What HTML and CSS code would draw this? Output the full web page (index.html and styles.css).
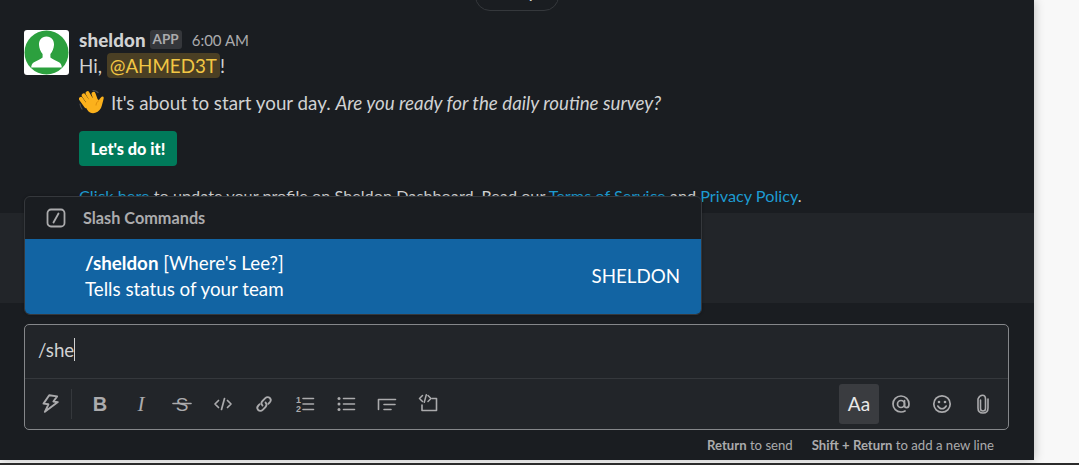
FILE: index.html
```html
<!DOCTYPE html>
<html lang="en">
<head>
    <meta charset="UTF-8">
    <title>sheldon</title>
    <link rel="stylesheet" href="styles.css">
</head>
<body>
    <div class="app">
        <!-- Message list -->
        <div class="messages">
            <div class="date-pill">Today</div>
            <div class="message">
                <svg class="avatar" viewBox="0 0 45 45">
                    <defs><clipPath id="disc"><circle cx="22.5" cy="22.5" r="22"/></clipPath></defs>
                    <rect width="45" height="45" rx="3" fill="#fff"/>
                    <circle cx="22.5" cy="22.5" r="22" fill="#2ca03e"/>
                    <g clip-path="url(#disc)" fill="#fff">
                        <path d="M22.5 6.500c-5 0-7.800 3.700-7.500 8.500.2 3.600 1.700 6.800 3.600 9v3.500c-2 1.800-6 3-9 5-1.700 1.200-2.400 3.200-2.400 5h30.600c0-1.800-.7-3.800-2.400-5-3-2-7-3.200-9-5V24c1.900-2.200 3.400-5.400 3.600-9 .3-4.800-2.500-8.500-7.500-8.500z"/>
                    </g>
                </svg>
                <div class="message-body">
                    <div class="message-head">
                        <span class="sender">sheldon</span>
                        <span class="app-tag">APP</span>
                        <span class="time">6:00 AM</span>
                    </div>
                    <p class="line line-hi">Hi, <span class="mention">@AHMED3T</span>!</p>
                    <p class="line line-wave">
                        <svg class="wave" viewBox="0 0 26 26">
                            <g stroke="#4a4f55" stroke-width="1.200" fill="none" stroke-linecap="round">
                                <path d="M1 15c.3 2 1 3.600 2 5"/>
                                <path d="M14 1.500c2 0 3.800.8 5 2"/>
                            </g>
                            <g fill="#fbb11c">
                                <rect x="2.500" y="7" width="4" height="13" rx="2" transform="rotate(-35 4.500 13.500)"/>
                                <rect x="5.500" y="3.500" width="4" height="14" rx="2" transform="rotate(-35 7.500 10.500)"/>
                                <rect x="9" y="1.500" width="4" height="14" rx="2" transform="rotate(-30 11 8.500)"/>
                                <rect x="14" y="2.500" width="4" height="13" rx="2" transform="rotate(-20 16 9)"/>
                                <path d="M5.500 15l6-7 8.500 3c1.500-2 2.500-3.500 3.500-3.500 1.500 0 1.500 1.500.8 3.500-.8 2.500-1 5-2.300 8-2 4-7 6.500-11 4.500-2.500-1.200-4-4.500-5.500-8.500z"/>
                            </g>
                            <path d="M20 11.500c-2 1-3 3-3 5" stroke="#e08e0b" stroke-width="1" fill="none"/>
                        </svg>It's about to start your day. <em>Are you ready for the daily routine survey?</em></p>
                    <button class="action-btn">Let's do it!</button>
                    <p class="line line-links"><a>Click here</a> to update your profile on Sheldon Dashboard. Read our <a>Terms of Service</a> and <a>Privacy Policy</a>.</p>
                </div>
            </div>
        </div>

        <div class="band"></div>

        <!-- Slash command popup -->
        <div class="popup">
            <div class="popup-head">
                <svg class="popup-icon" viewBox="0 0 20 20">
                    <rect x="1.500" y="1.500" width="17" height="17" rx="3.500" fill="none" stroke="#ababad" stroke-width="1.800"/>
                    <path d="M7.500 14.500l5-9" stroke="#ababad" stroke-width="1.800" stroke-linecap="round"/>
                </svg>
                <span>Slash Commands</span>
            </div>
            <div class="popup-item">
                <div>
                    <div><b>/sheldon</b> [Where's Lee?]</div>
                    <div>Tells status of your team</div>
                </div>
                <span>SHELDON</span>
            </div>
        </div>

        <!-- Composer -->
        <div class="composer">
            <div class="composer-input"><span class="typed">/she</span></div>
            <div class="toolbar">
                <svg class="tool-icon" viewBox="0 0 20 20">
                    <path d="M8 1.500h8l-3 5.500h4.500L6 18.500l2.500-8H3.500z" fill="none" stroke="#ababad" stroke-width="1.900" stroke-linejoin="round" transform="rotate(8 10 10)"/>
                </svg>
                <span class="tool-sep"></span>
                <span class="tool tool-b">B</span>
                <span class="tool tool-i">I</span>
                <svg class="tool-icon" viewBox="0 0 20 20">
                    <text x="10" y="16.500" text-anchor="middle" class="strike-s">S</text>
                    <path d="M1 9.500h18" stroke="#ababad" stroke-width="1.600" stroke-linecap="round"/>
                </svg>
                <svg class="tool-icon" viewBox="0 0 20 20">
                    <path d="M5.500 6.500L2 10l3.500 3.500M14.500 6.500L18 10l-3.500 3.500M11.500 4.500l-3 11" fill="none" stroke="#ababad" stroke-width="1.700" stroke-linecap="round" stroke-linejoin="round"/>
                </svg>
                <svg class="tool-icon" viewBox="0 0 20 20">
                    <g fill="none" stroke="#ababad" stroke-width="1.800" stroke-linecap="round">
                        <path d="M8.500 11.500c-1.500-1.500-1.300-3.200 0-4.500l2.800-2.800c1.400-1.400 3.300-1.400 4.500-.2s1.200 3.100-.2 4.500l-1.300 1.300"/>
                        <path d="M11.500 8.500c1.500 1.500 1.300 3.200 0 4.500l-2.800 2.800c-1.400 1.400-3.300 1.400-4.500.2s-1.200-3.100.2-4.500l1.300-1.300"/>
                    </g>
                </svg>
                <svg class="tool-icon" viewBox="0 0 20 20">
                    <text x="1" y="8.500" class="list-num">1</text>
                    <text x="1" y="17.500" class="list-num">2</text>
                    <path d="M8 4.500h10.500M8 10h10.500M8 15.500h10.500" stroke="#ababad" stroke-width="1.600" stroke-linecap="round"/>
                </svg>
                <svg class="tool-icon" viewBox="0 0 20 20">
                    <g fill="#ababad"><circle cx="3" cy="4.500" r="1.500"/><circle cx="3" cy="10" r="1.500"/><circle cx="3" cy="15.500" r="1.500"/></g>
                    <path d="M7.500 4.500h11M7.500 10h11M7.500 15.500h11" stroke="#ababad" stroke-width="1.600" stroke-linecap="round"/>
                </svg>
                <svg class="tool-icon" viewBox="0 0 20 20">
                    <path d="M1.500 5.500h17M7 10.500h11M7 15.500h7M1.500 5.500v10" stroke="#ababad" stroke-width="1.600" stroke-linecap="round" fill="none"/>
                </svg>
                <svg class="tool-icon" viewBox="0 0 20 20">
                    <path d="M14 4.500h4.500v12H4V11" fill="none" stroke="#ababad" stroke-width="1.600" stroke-linecap="round" stroke-linejoin="round"/>
                    <path d="M4.500 1.500L1.500 4.500l3 3M10 1.500l3 3-3 3M8.300.800L6.300 8.200" fill="none" stroke="#ababad" stroke-width="1.500" stroke-linecap="round" stroke-linejoin="round"/>
                </svg>
                <span class="tool-spacer"></span>
                <span class="tool-aa">Aa</span>
                <svg class="tool-icon tool-right" viewBox="0 0 20 20">
                    <circle cx="10" cy="10" r="3.500" fill="none" stroke="#ababad" stroke-width="1.700"/>
                    <path d="M13.500 6.500v4.800c0 1.600 1 2.400 2.200 2.400s2.300-1.300 2.300-3.700c0-4.600-3.400-8-8-8s-8 3.400-8 8 3.400 8 8 8c1.500 0 2.800-.3 4-1" fill="none" stroke="#ababad" stroke-width="1.700" stroke-linecap="round"/>
                </svg>
                <svg class="tool-icon tool-right" viewBox="0 0 20 20">
                    <circle cx="10" cy="10" r="8.200" fill="none" stroke="#ababad" stroke-width="1.700"/>
                    <circle cx="7" cy="8" r="1.300" fill="#ababad"/><circle cx="13" cy="8" r="1.300" fill="#ababad"/>
                    <path d="M5.800 12c1 1.800 2.500 2.700 4.200 2.700s3.200-.9 4.200-2.700" fill="none" stroke="#ababad" stroke-width="1.600" stroke-linecap="round"/>
                </svg>
                <svg class="tool-icon tool-right" viewBox="0 0 20 20">
                    <path d="M7.500 6v8.500c0 1.500 1 2.500 2.500 2.500s2.500-1 2.500-2.500V5c0-2.400-1.200-3.700-3-3.700S6 2.800 5 5v9c0 3.300 2 5 5 5s5-1.700 5-5V5" fill="none" stroke="#ababad" stroke-width="1.600" stroke-linecap="round"/>
                </svg>
            </div>
        </div>

        <div class="hints">
            <span><b>Return</b> to send</span>
            <span><b>Shift + Return</b> to add a new line</span>
        </div>
    </div>
    <div class="bottom-bar"></div>
</body>
</html>
```

FILE: styles.css
```css
* {
    box-sizing: border-box;
}

html, body {
    height: 100%;
}

body {
    margin: 0;
    background: #f8f8f8;
    font-family: Lato, "Open Sans", sans-serif;
    color: #d1d2d3;
    overflow: hidden;
}

.app {
    position: relative;
    width: 1034px;
    height: 460px;
    background: #1a1d21;
    box-shadow: 0 0 10px rgba(0,0,0,0.25);
    display: flex;
    flex-direction: column;
}

.bottom-bar {
    position: relative;
    height: 2px;
    margin-top: 3px;
    background: #2b2b2b;
}

.messages {
    height: 213px;
    overflow: hidden;
    flex-shrink: 0;
}

.date-pill {
    width: 84px;
    height: 30px;
    margin: -19px auto 0;
    border: 1px solid #35383c;
    border-radius: 15px;
    text-align: center;
    font-size: 14px;
    font-weight: 700;
    line-height: 24px;
}

.message {
    display: flex;
    gap: 10px;
    padding: 19px 24px 0;
}

.avatar {
    width: 45px;
    height: 45px;
    flex-shrink: 0;
}

.message-body {
    min-width: 0;
}

.message-head {
    display: flex;
    align-items: center;
    height: 20px;
}

.sender {
    font-size: 18.75px;
    font-weight: 900;
    color: #d1d2d3;
    margin-top: -2px;
    letter-spacing: 0.1px;
}

.app-tag {
    margin-left: 4px;
    margin-top: -2px;
    padding: 0 3px;
    height: 19px;
    line-height: 19px;
    background: #35373b;
    border-radius: 3px;
    font-size: 13.5px;
    font-weight: 700;
    color: #ababad;
}

.time {
    margin-left: 10px;
    font-size: 15px;
    color: #ababad;
}

.line {
    margin: 0;
    font-size: 18.75px;
    line-height: 26px;
}

.line-hi {
    margin-top: 3px;
}

.mention {
    background: #4a3f24;
    color: #f2c744;
    border-radius: 4px;
    padding: 1px 3px;
}

.line-wave {
    margin-top: 10px;
    white-space: nowrap;
}

.wave {
    width: 26px;
    height: 26px;
    margin-right: 6px;
    vertical-align: -5px;
}

.action-btn {
    display: block;
    margin-top: 15px;
    width: 98px;
    height: 35px;
    border: 0;
    border-radius: 4px;
    background: #007a5a;
    color: #fff;
    font-family: inherit;
    font-size: 16.25px;
    font-weight: 900;
}

.line-links {
    margin-top: 17px;
    font-size: 16.25px;
    white-space: nowrap;
}

.line-links a {
    color: #1d9bd1;
}

.band {
    height: 90px;
    flex-shrink: 0;
    background: #222529;
}

.popup {
    position: absolute;
    left: 24px;
    top: 196px;
    width: 678px;
    height: 119px;
    border: 1px solid #35383c;
    border-radius: 6px;
    background: #1a1d21;
    overflow: hidden;
    box-shadow: 0 0 3px rgba(0,0,0,0.3);
}

.popup-head {
    height: 42px;
    padding: 0 0 2px 21px;
    display: flex;
    align-items: center;
    gap: 17px;
    font-size: 16.25px;
    font-weight: 700;
    color: #ababad;
}

.popup-icon {
    width: 20px;
    height: 20px;
    margin-top: 2px;
}

.popup-item {
    height: 75px;
    padding: 0 21px 1px 60px;
    display: flex;
    align-items: center;
    justify-content: space-between;
    background: #1264a3;
    color: #fff;
    font-size: 18.75px;
    line-height: 26px;
}

.composer {
    margin: 21px 25px 0 24px;
    height: 106px;
    flex-shrink: 0;
    background: #222529;
    border: 1px solid #85878a;
    border-radius: 5px;
}

.composer-input {
    height: 54px;
    padding: 13px 13px 0;
    border-bottom: 1px solid #35383c;
    font-size: 18.75px;
    line-height: 24px;
}

.typed {
    border-right: 1px solid #d1d2d3;
}

.toolbar {
    height: 50px;
    display: flex;
    align-items: center;
    padding-left: 15px;
    padding-right: 15px;
}

.tool-icon {
    width: 20px;
    height: 20px;
    margin-right: 21px;
    flex-shrink: 0;
}

.toolbar .tool-icon:first-child {
    margin-right: 11px;
}

.tool-sep {
    width: 1px;
    height: 30px;
    background: #35383c;
    margin-right: 18px;
}

.tool {
    width: 20px;
    margin-right: 21px;
    text-align: center;
    color: #ababad;
    font-size: 21px;
    line-height: 20px;
}

.tool-b {
    font-family: "Liberation Sans", sans-serif;
    font-weight: 700;
    font-size: 20px;
}

.tool-i {
    font-family: "Liberation Serif", serif;
    font-style: italic;
}

.strike-s {
    font-family: "Liberation Sans", sans-serif;
    font-size: 19px;
    fill: #ababad;
}

.list-num {
    font-family: "Liberation Sans", sans-serif;
    font-size: 9px;
    font-weight: 700;
    fill: #ababad;
}

.tool-spacer {
    flex: 1;
}

.tool-aa {
    width: 40px;
    height: 40px;
    margin-right: 12px;
    background: #3a3c40;
    border-radius: 3px;
    text-align: center;
    line-height: 40px;
    font-size: 19px;
    color: #e8e8e8;
}

.toolbar .tool-right {
    margin-right: 21px;
}

.toolbar .tool-right:last-child {
    margin-right: 0;
}

.hints {
    margin: 7px 40px 0 0;
    display: flex;
    justify-content: flex-end;
    gap: 19px;
    font-size: 13.15px;
    color: #ababad;
}
```
